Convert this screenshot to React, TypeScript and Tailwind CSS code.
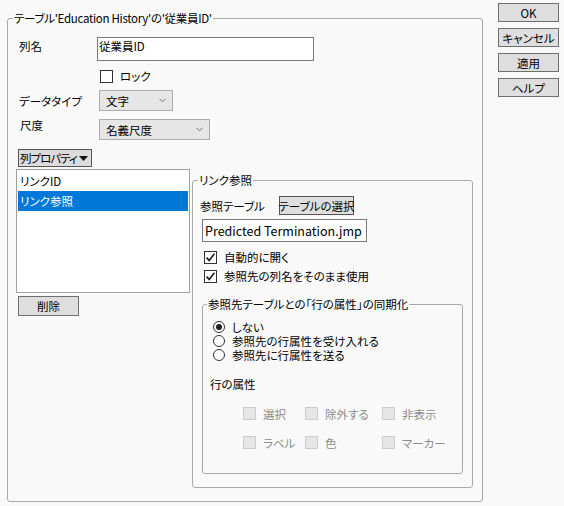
import type { ReactNode } from 'react'

const FONT = "font-['Noto_Sans_CJK_JP',sans-serif] [font-feature-settings:'palt']"

function Chevron() {
  return (
    <svg width="7" height="5" viewBox="0 0 7 5" className="text-[#707070]">
      <path d="M0.5 0.8 L3.5 3.8 L6.5 0.8" fill="none" stroke="currentColor" strokeWidth="1" />
    </svg>
  )
}

function Check() {
  return (
    <svg width="11" height="11" viewBox="0 0 11 11">
      <path d="M1.6 5.6 L4.2 8.4 L9.4 1.8" fill="none" stroke="#1a1a1a" strokeWidth="1.6" />
    </svg>
  )
}

function PushButton({ children, className = '' }: { children: ReactNode; className?: string }) {
  return (
    <div
      className={`flex items-center justify-center whitespace-nowrap border border-[#6f6f6f] bg-[#dedede] leading-[14px] ${className}`}
    >
      {children}
    </div>
  )
}

function Select({ value, width }: { value: string; width: string }) {
  return (
    <div
      className={`flex h-[21px] items-center justify-between border border-[#adadad] bg-[#e6e6e6] pl-[6px] pr-[6px] ${width}`}
    >
      <span className="leading-[14px]">{value}</span>
      <Chevron />
    </div>
  )
}

function CheckBox({ label, checked }: { label: string; checked?: boolean }) {
  return (
    <div className="flex h-[14px] items-center">
      <span className="flex h-[13px] w-[13px] items-center justify-center border border-[#333333] bg-white">
        {checked && <Check />}
      </span>
      <span className="ml-[7px] whitespace-nowrap leading-[14px]">{label}</span>
    </div>
  )
}

function Radio({ label, selected, h }: { label: string; selected?: boolean; h: string }) {
  return (
    <div className={`flex items-center ${h}`}>
      <span className="flex h-[12px] w-[12px] items-center justify-center rounded-full border border-[#333333] bg-white">
        {selected && <span className="h-[6px] w-[6px] rounded-full bg-[#222222]" />}
      </span>
      <span className="ml-[7px] whitespace-nowrap leading-[12px]">{label}</span>
    </div>
  )
}

function Disabled({ label }: { label: string }) {
  return (
    <div className="flex h-[13px] items-center">
      <span className="h-[13px] w-[13px] border border-[#cccccc] bg-[#e6e6e6]" />
      <span className="ml-[7px] whitespace-nowrap leading-[14px] text-[#8c8c8c]">{label}</span>
    </div>
  )
}

export default function App() {
  return (
    <div className={`flex h-[506px] w-[564px] items-start bg-[#f9f9f9] text-[11.5px] text-black ${FONT}`}>
      <fieldset className="ml-[7px] mt-[11px] h-[491px] w-[476px] rounded-[3px] border border-[#a9a9a9]">
        <legend className="ml-[5px] whitespace-nowrap px-[1px] leading-[14px] tracking-[-0.3px]">
          テーブル'Education History'の'従業員ID'
        </legend>

        {/* 列名 */}
        <div className="mt-[12px] flex items-start">
          <span className="ml-[11px] mt-[2px] w-[78px] leading-[14px]">列名</span>
          <div className="h-[24px] w-[217px] border border-[#7a7a7a] bg-white pl-[1px] pt-[1px] leading-[14px]">
            従業員ID
          </div>
        </div>

        <div className="ml-[92px] mt-[8px]">
          <CheckBox label="ロック" />
        </div>

        <div className="mt-[7px] flex items-center">
          <span className="ml-[11px] w-[80px] leading-[14px]">データタイプ</span>
          <Select value="文字" width="w-[74px]" />
        </div>

        <div className="mt-[8px] flex items-start">
          <span className="ml-[12px] mt-[-1px] w-[79px] leading-[14px]">尺度</span>
          <Select value="名義尺度" width="w-[111px]" />
        </div>

        <div className="ml-[10px] mt-[9px] flex h-[18px] w-[74px] items-center justify-between whitespace-nowrap border border-[#555555] bg-[#dcdcdc] pl-[1px] pr-[3px]">
          <span className="leading-[14px] tracking-[-1px]">列プロパティ</span>
          <svg width="9" height="5" viewBox="0 0 9 5">
            <path d="M0 0 H9 L4.5 5 Z" fill="#111111" />
          </svg>
        </div>

        <div className="mt-[2px] flex items-start">
          <div className="ml-[8px] w-[174px]">
            <div className="h-[124px] border border-[#a0a0a0] bg-white p-[1px]">
              <div className="flex h-[20px] items-center pl-[2px] leading-[14px]">リンクID</div>
              <div className="flex h-[20px] items-center bg-[#0078d7] pl-[2px] leading-[14px] text-white">
                リンク参照
              </div>
            </div>
            <PushButton className="ml-[2px] mt-[3px] h-[20px] w-[61px]">削除</PushButton>
          </div>

          <fieldset className="ml-[2px] mt-[4px] h-[315px] w-[281px] rounded-[3px] border border-[#a9a9a9]">
            <legend className="ml-[5px] px-[1px] leading-[14px]">リンク参照</legend>

            <div className="mt-[9px] flex items-center">
              <span className="ml-[7px] w-[79px] whitespace-nowrap leading-[14px]">参照テーブル</span>
              <PushButton className="h-[19px] w-[75px] border-[#555555] bg-[#dcdcdc]">テーブルの選択</PushButton>
            </div>

            <div className="ml-[9px] mt-[4px] flex h-[23px] w-[165px] items-center whitespace-nowrap border border-[#7a7a7a] bg-white pl-[2px] text-[12.5px] leading-[16px]">
              Predicted Termination.jmp
            </div>

            <div className="ml-[11px] mt-[8px]">
              <CheckBox label="自動的に開く" checked />
            </div>
            <div className="ml-[11px] mt-[5px]">
              <CheckBox label="参照先の列名をそのまま使用" checked />
            </div>

            <fieldset className="ml-[9px] mt-[14px] h-[177px] w-[261px] rounded-[3px] border border-[#a9a9a9]">
              <legend className="ml-[4px] whitespace-nowrap px-[1px] leading-[14px]">
                参照先テーブルとの「行の属性」の同期化
              </legend>

              <div className="ml-[10px] mt-[9px]">
                <Radio label="しない" selected h="h-[14px]" />
                <Radio label="参照先の行属性を受け入れる" h="h-[14px]" />
                <Radio label="参照先に行属性を送る" h="h-[13px]" />
              </div>

              <div className="ml-[7px] mt-[16px] leading-[14px]">行の属性</div>

              <div className="ml-[40px] mt-[16px] grid grid-cols-[62px_77px_auto]">
                <Disabled label="選択" />
                <Disabled label="除外する" />
                <Disabled label="非表示" />
              </div>
              <div className="ml-[40px] mt-[16px] grid grid-cols-[62px_77px_auto]">
                <Disabled label="ラベル" />
                <Disabled label="色" />
                <Disabled label="マーカー" />
              </div>
            </fieldset>
          </fieldset>
        </div>
      </fieldset>

      <div className="ml-[15px] mt-[3px] flex flex-col gap-[6px]">
        <PushButton className="h-[19px] w-[61px]">OK</PushButton>
        <PushButton className="h-[19px] w-[61px]">キャンセル</PushButton>
        <PushButton className="h-[19px] w-[61px]">適用</PushButton>
        <PushButton className="h-[19px] w-[61px]">ヘルプ</PushButton>
      </div>
    </div>
  )
}
